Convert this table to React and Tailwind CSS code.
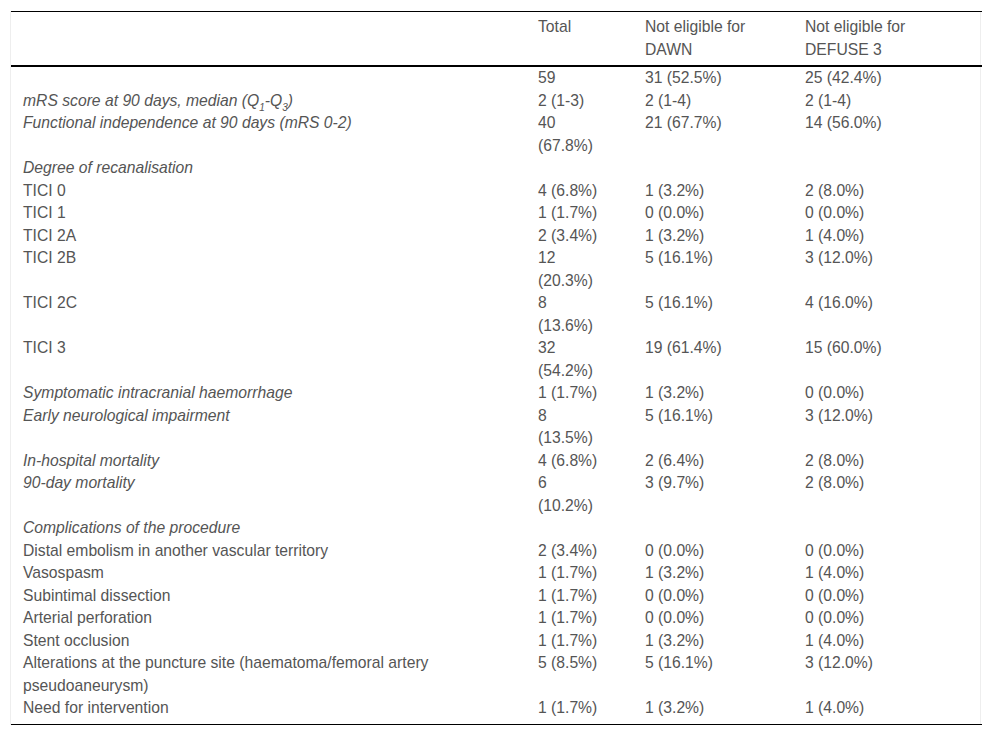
import React from 'react';

const rows = [
    { label: '', cells: ['59', '31 (52.5%)', '25 (42.4%)'] },
    { label: 'mrs', italic: true, cells: ['2 (1-3)', '2 (1-4)', '2 (1-4)'] },
    { label: 'Functional independence at 90 days (mRS 0-2)', italic: true, cells: ['40 (67.8%)', '21 (67.7%)', '14 (56.0%)'] },
    { label: 'Degree of recanalisation', italic: true, cells: ['', '', ''] },
    { label: 'TICI 0', cells: ['4 (6.8%)', '1 (3.2%)', '2 (8.0%)'] },
    { label: 'TICI 1', cells: ['1 (1.7%)', '0 (0.0%)', '0 (0.0%)'] },
    { label: 'TICI 2A', cells: ['2 (3.4%)', '1 (3.2%)', '1 (4.0%)'] },
    { label: 'TICI 2B', cells: ['12 (20.3%)', '5 (16.1%)', '3 (12.0%)'] },
    { label: 'TICI 2C', cells: ['8 (13.6%)', '5 (16.1%)', '4 (16.0%)'] },
    { label: 'TICI 3', cells: ['32 (54.2%)', '19 (61.4%)', '15 (60.0%)'] },
    { label: 'Symptomatic intracranial haemorrhage', italic: true, cells: ['1 (1.7%)', '1 (3.2%)', '0 (0.0%)'] },
    { label: 'Early neurological impairment', italic: true, cells: ['8 (13.5%)', '5 (16.1%)', '3 (12.0%)'] },
    { label: 'In-hospital mortality', italic: true, cells: ['4 (6.8%)', '2 (6.4%)', '2 (8.0%)'] },
    { label: '90-day mortality', italic: true, cells: ['6 (10.2%)', '3 (9.7%)', '2 (8.0%)'] },
    { label: 'Complications of the procedure', italic: true, cells: ['', '', ''] },
    { label: 'Distal embolism in another vascular territory', cells: ['2 (3.4%)', '0 (0.0%)', '0 (0.0%)'] },
    { label: 'Vasospasm', cells: ['1 (1.7%)', '1 (3.2%)', '1 (4.0%)'] },
    { label: 'Subintimal dissection', cells: ['1 (1.7%)', '0 (0.0%)', '0 (0.0%)'] },
    { label: 'Arterial perforation', cells: ['1 (1.7%)', '0 (0.0%)', '0 (0.0%)'] },
    { label: 'Stent occlusion', cells: ['1 (1.7%)', '1 (3.2%)', '1 (4.0%)'] },
    { label: 'Alterations at the puncture site (haematoma/femoral artery pseudoaneurysm)', cells: ['5 (8.5%)', '5 (16.1%)', '3 (12.0%)'] },
    { label: 'Need for intervention', cells: ['1 (1.7%)', '1 (3.2%)', '1 (4.0%)'] },
];

function Label({ row }) {
    if (row.label === 'mrs') {
        return (
            <>
                mRS score at 90 days, median (Q<sub className="-bottom-[5px] text-[10px]">1</sub>-Q<sub className="-bottom-[5px] text-[10px]">3</sub>)
            </>
        );
    }
    return row.label;
}

export default function App() {
    return (
        <div className="bg-white pl-[10px] pt-[11px] font-['Liberation_Sans',Arial,sans-serif] text-[15.7px] leading-[22.5px] text-[#555]">
            <div className="w-[971px] border-x border-[#eee]">
                <table className="w-full table-fixed border-collapse">
                    <colgroup>
                        <col className="w-[515px]" />
                        <col className="w-[107px]" />
                        <col className="w-[160px]" />
                        <col className="w-[189px]" />
                    </colgroup>
                    <thead>
                        <tr className="border-t border-b-2 border-t-black border-b-black">
                            <th className="pl-3 pt-1 pb-1" />
                            <th className="pl-3 pr-[30px] pt-1 pb-1 text-left align-top font-normal">Total</th>
                            <th className="pl-3 pr-[30px] pt-1 pb-1 text-left align-top font-normal">Not eligible for DAWN</th>
                            <th className="pl-3 pr-[30px] pt-1 pb-1 text-left align-top font-normal">Not eligible for DEFUSE 3</th>
                        </tr>
                    </thead>
                    <tbody className="border-b border-black">
                        {rows.map((row, i) => {
                            const pad = i === rows.length - 1 ? 'pb-1' : '';
                            return (
                                <tr key={i} className="align-top">
                                    <td className={`pl-3 pr-3 ${pad} ${row.italic ? 'italic' : ''}`}>
                                        <Label row={row} />
                                    </td>
                                    <td className={`pl-3 pr-[30px] ${pad}`}>{row.cells[0]}</td>
                                    <td className={`pl-3 pr-3 ${pad}`}>{row.cells[1]}</td>
                                    <td className={`pl-3 pr-3 ${pad}`}>{row.cells[2]}</td>
                                </tr>
                            );
                        })}
                    </tbody>
                </table>
            </div>
        </div>
    );
}
